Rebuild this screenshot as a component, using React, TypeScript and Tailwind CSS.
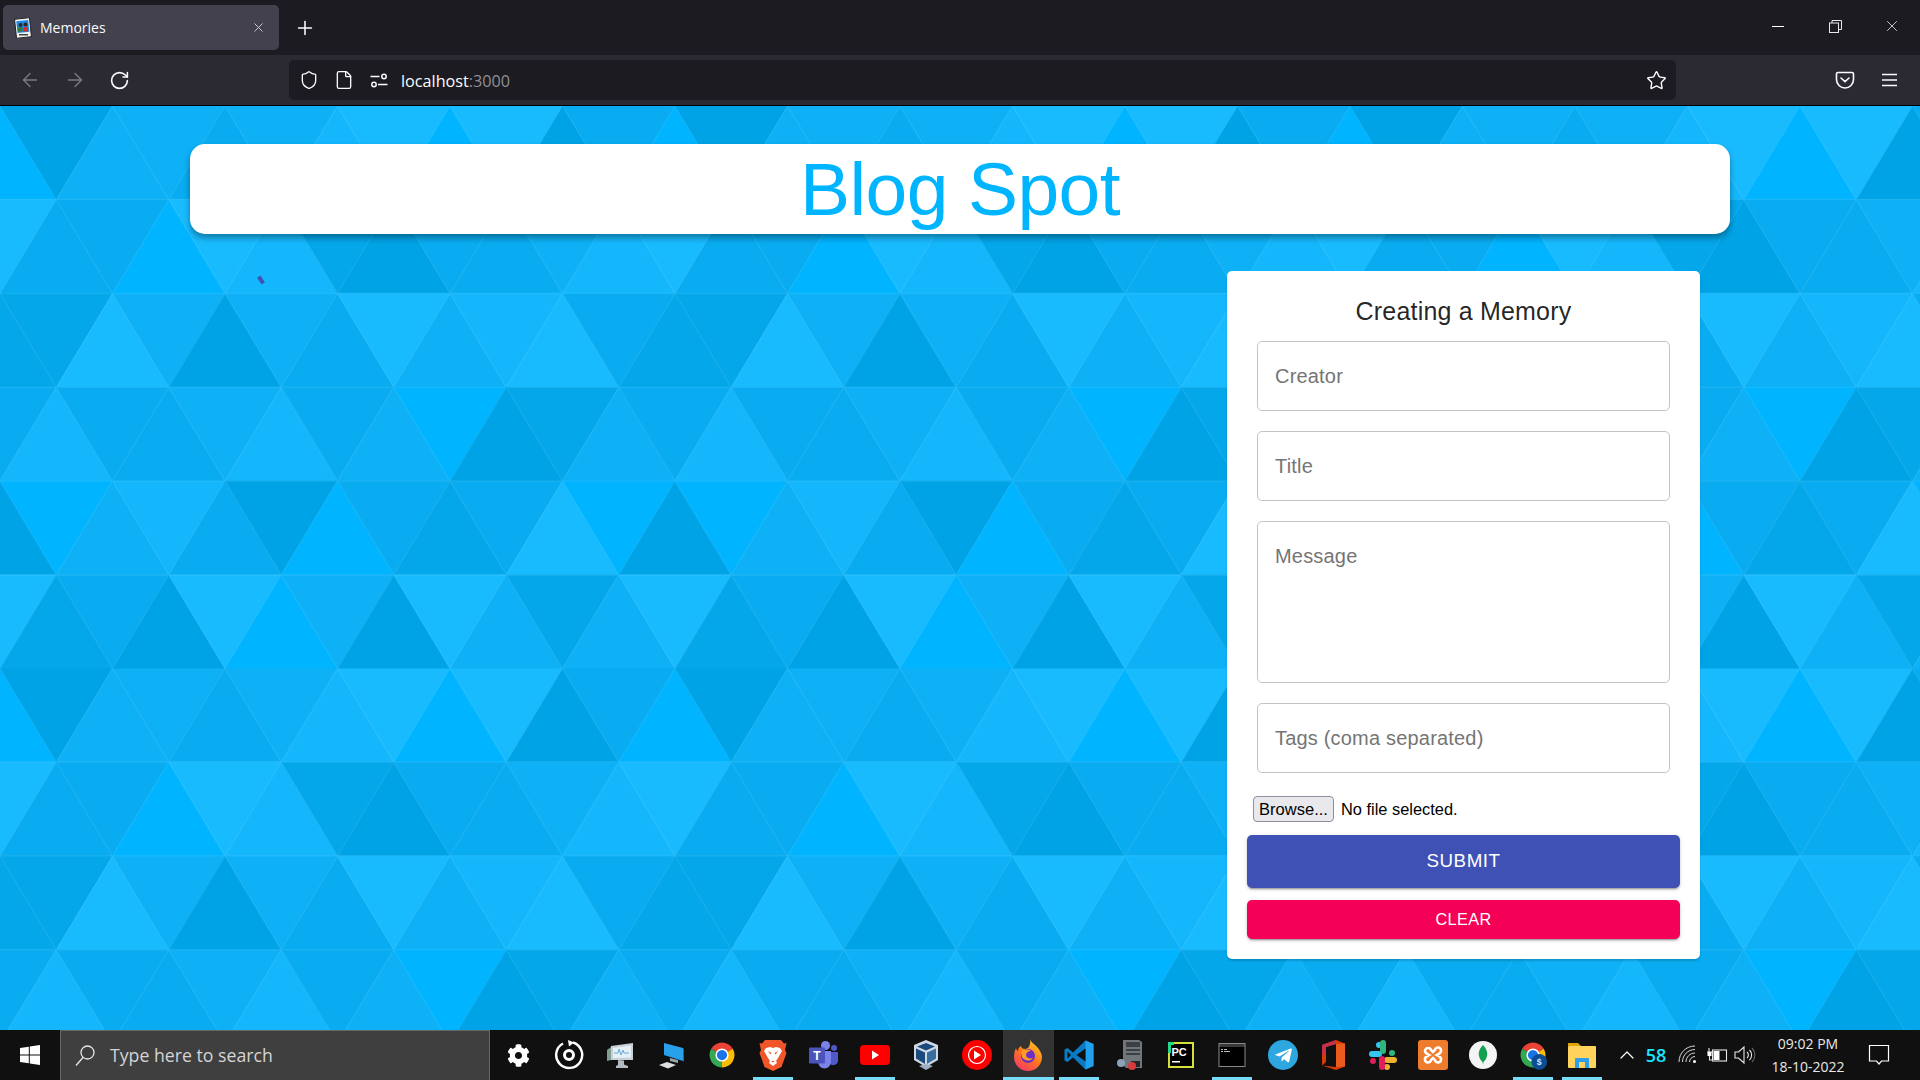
import type { ReactNode } from 'react';
import { ArrowLeft, ArrowRight, RotateCw, Shield, File, Star, X, Plus, ChevronUp } from 'lucide-react';
import { FaCog, FaTelegramPlane } from 'react-icons/fa';

// one tile of the background mesh, 12 triangles per row, 6 rows
const tileRows = ['afddedcbabfe', 'beeabcgfeedc', 'ggbdfdebdcbe', 'eceedcedafgd', 'fadcefaegeba', 'bgefbadfbdgd'];
const shades: Record<string, string> = {
  a: '#00b4ff',
  b: '#19bbff',
  c: '#14b7fc',
  d: '#0eb1f6',
  e: '#09acf0',
  g: '#04a7e9',
  f: '#00a3e5',
};
const triW = 56.25;
const triH = 93.75;

const MeshBackground = () => {
  const tris: ReactNode[] = [];
  tileRows.forEach((row, r) => {
    for (let k = 0; k <= 12; k++) {
      const cx = k * triW;
      const top = r * triH;
      const bot = top + triH;
      const up = k % 2 === r % 2;
      const points = up
        ? `${cx},${top} ${cx - triW},${bot} ${cx + triW},${bot}`
        : `${cx - triW},${top} ${cx + triW},${top} ${cx},${bot}`;
      const fill = shades[row[k % 12]];
      tris.push(<polygon key={`${r}-${k}`} points={points} fill={fill} stroke={fill} strokeWidth={0.4} />);
    }
  });
  return (
    <svg className="absolute inset-0 h-full w-full">
      <defs>
        <pattern id="mesh" patternUnits="userSpaceOnUse" width={675} height={562.5}>
          {tris}
        </pattern>
      </defs>
      <rect width="100%" height="100%" fill="url(#mesh)" />
    </svg>
  );
};

const Favicon = () => (
  <svg width="18" height="20" viewBox="0 0 18 20" className="shrink-0">
    <rect x="1.5" y="0.5" width="15" height="19" fill="#f2f2f2" stroke="#222" transform="rotate(-6 9 10)" />
    <rect x="3" y="2.5" width="12" height="12" fill="#1e88e5" transform="rotate(-6 9 10)" />
    <circle cx="6.5" cy="7" r="2" fill="#2e2a25" />
    <circle cx="11.5" cy="6.5" r="2" fill="#2e2a25" />
    <rect x="4" y="9.5" width="4.5" height="4" fill="#2e7d32" />
    <rect x="9.5" y="9" width="4.5" height="4.5" fill="#d32f2f" />
    <rect x="5" y="16" width="9" height="1.5" fill="#444" />
  </svg>
);

const Perms = () => (
  <svg width="20" height="20" viewBox="0 0 20 20" fill="none" stroke="#fbfbfe" strokeWidth="1.5">
    <path d="M1.5 6.5h9M9 14.5h9.5" />
    <circle cx="15" cy="6.5" r="2.2" />
    <circle cx="5" cy="14.5" r="2.2" />
  </svg>
);

const Pocket = () => (
  <svg width="20" height="20" viewBox="0 0 20 20" fill="none" stroke="#fbfbfe" strokeWidth="1.6">
    <path d="M3 2.5h14a1.5 1.5 0 0 1 1.5 1.5v5.5a8.5 8.5 0 0 1-17 0V4A1.5 1.5 0 0 1 3 2.5z" />
    <path d="M6 8l4 3.6L14 8" strokeLinecap="round" />
  </svg>
);

const Hamburger = () => (
  <svg width="18" height="14" viewBox="0 0 18 14" stroke="#fbfbfe" strokeWidth="1.6">
    <path d="M1 1.5h15M1 7h15M1 12.5h15" />
  </svg>
);

const Restore = () => (
  <svg width="13" height="13" viewBox="0 0 13 13" fill="none" stroke="#e8e8e8" strokeWidth="1">
    <rect x="0.5" y="3" width="9" height="9.5" />
    <path d="M3 3V0.5h9.5v9H9.5" />
  </svg>
);

const WinLogo = () => (
  <svg width="20" height="20" viewBox="0 0 20 20" fill="#fff">
    <polygon points="0,3 8.8,1.7 8.8,9.5 0,9.5" />
    <polygon points="9.8,1.5 20,0 20,9.5 9.8,9.5" />
    <polygon points="0,10.5 8.8,10.5 8.8,18.3 0,17" />
    <polygon points="9.8,10.5 20,10.5 20,20 9.8,18.5" />
  </svg>
);

const SearchGlass = () => (
  <svg width="20" height="22" viewBox="0 0 20 22" fill="none" stroke="#e6e6e6" strokeWidth="1.3">
    <circle cx="12.5" cy="7.5" r="6.5" />
    <path d="M8 12.5L1 20.5" />
  </svg>
);

const Target = () => (
  <svg width="30" height="30" viewBox="0 0 30 30" fill="none" stroke="#fff">
    <path d="M19 2.5A13 13 0 1 1 9 3.5" strokeWidth="2.4" />
    <path d="M14 0l6 2.5-5 4z" fill="#fff" stroke="none" />
    <circle cx="15" cy="15" r="4.5" strokeWidth="3" />
  </svg>
);

const TaskMonitor = () => (
  <svg width="30" height="30" viewBox="0 0 30 30">
    <path d="M6 6l22-3v17L6 20z" fill="#c9d0d4" />
    <path d="M8 8l18-2.500v12L8 18z" fill="#e6f1f7" />
    <path d="M9 13h4l1-4 2 6 2-5 1 3h5" fill="none" stroke="#6aa9d6" strokeWidth="1" />
    <path d="M2 10l4-3v13l-4 1z" fill="#7f9d92" />
    <path d="M13 20l6 .5v4l4 1.500v2H11v-2l2-1z" fill="#b4bbc0" />
  </svg>
);

const MyComputer = () => (
  <svg width="30" height="30" viewBox="0 0 30 30">
    <path d="M8 3l19 5v13L8 15z" fill="#29a0ea" />
    <path d="M8 3l19 5 1 1v13L27 21V8z" fill="#556" />
    <path d="M14 18l8 2v3l-8-2z" fill="#9aa4ab" />
    <path d="M3 25l8-3 9 3-8 3.500z" fill="#dcdfe2" />
  </svg>
);

const Chrome = ({ badge }: { badge?: boolean }) => (
  <svg width="30" height="30" viewBox="0 0 48 48">
    <path d="M24 24L6.7 14A20 20 0 0 1 41.3 14Z" fill="#ea4335" />
    <path d="M24 24L41.3 14A20 20 0 0 1 24 44Z" fill="#fbbc04" />
    <path d="M24 24L24 44A20 20 0 0 1 6.7 14Z" fill="#34a853" />
    <circle cx="24" cy="24" r="10.5" fill="#fff" />
    <circle cx="24" cy="24" r="8.2" fill="#1a73e8" />
    {badge && (
      <>
        <circle cx="34" cy="35" r="12.5" fill="#0d4d91" />
        <text x="34" y="40" textAnchor="middle" fontSize="14" fontWeight="700" fill="#cfe6ff" fontFamily="Liberation Sans">
          $
        </text>
      </>
    )}
  </svg>
);

const Brave = () => (
  <svg width="28" height="32" viewBox="0 0 28 32">
    <path d="M6 1h16l3 3.5 2.5-.5L26 11l1.5 3-5 14L14 32l-8.500-4-5-14L2 11 .5 4 3 4.500z" fill="#f0562a" />
    <path d="M7 9l4-1 3 1 3-1 4 1 2 3-4 7-2 3 1 2-4 3-4-3 1-2-2-3-4-7z" fill="#fff" />
    <path d="M9 12l3.500 2-1 1.500zM19 12l-3.500 2 1 1.500zM12 22h4l-2 1.500z" fill="#f0562a" />
  </svg>
);

const Teams = () => (
  <svg width="30" height="30" viewBox="0 0 30 30">
    <circle cx="16.500" cy="5.500" r="4.500" fill="#7b83eb" />
    <circle cx="25" cy="8" r="3" fill="#5059c9" />
    <path d="M20 12h9v9a5 5 0 0 1-9 2z" fill="#5059c9" />
    <path d="M9 11h13v11a6.500 6.500 0 0 1-13 0z" fill="#7b83eb" />
    <rect x="0" y="7.500" width="16" height="16" rx="1" fill="#4b53bc" />
    <text x="8" y="20" textAnchor="middle" fontSize="12" fontWeight="700" fill="#fff" fontFamily="Liberation Sans">
      T
    </text>
  </svg>
);

const YouTube = () => (
  <svg width="30" height="30" viewBox="0 0 30 30">
    <rect x="0" y="5" width="30" height="20" rx="4" fill="#ff0000" />
    <path d="M12 10.500l7 4.500-7 4.500z" fill="#fff" />
  </svg>
);

const VBox = () => (
  <svg width="28" height="32" viewBox="0 0 28 32">
    <path d="M14 1l12 5v15l-12 7L2 21V6z" fill="#cfd8e3" />
    <path d="M14 4l9 3.500-9 4-9-4z" fill="#1b4a7c" />
    <path d="M4 9.500l9 4V25l-9-5.500z" fill="#1b4a7c" />
    <path d="M24 9.500l-9 4V25l9-5.500z" fill="#3a6d9f" />
    <path d="M7 27l7 4 7-4-7-2z" fill="#9fb0c4" />
  </svg>
);

const YtMusic = () => (
  <svg width="30" height="30" viewBox="0 0 30 30">
    <circle cx="15" cy="15" r="15" fill="#ff0000" />
    <circle cx="15" cy="15" r="8.500" fill="none" stroke="#fff" strokeWidth="1.200" />
    <path d="M12 10.500l7 4.500-7 4.500z" fill="#fff" />
  </svg>
);

const Firefox = () => (
  <svg width="30" height="32" viewBox="0 0 30 32">
    <defs>
      <linearGradient id="ffg" x1="0.8" y1="0" x2="0.2" y2="1">
        <stop offset="0" stopColor="#ffcb2e" />
        <stop offset="0.5" stopColor="#ff7a1a" />
        <stop offset="1" stopColor="#f5356b" />
      </linearGradient>
    </defs>
    <path d="M17 0c1 4 5 5 8 9 3 4 4 7 4 9a14 14 0 0 1-28 0c0-4 1-7 2-9 .5 2 1.500 3 2 3 0-2 1-4 3-5 0 2 2 3 4 3 4 0 6-5 5-10z" fill="url(#ffg)" />
    <circle cx="15" cy="17" r="7" fill="#6a2ec4" />
    <path d="M8 13c3-3 7-3 10-1-3 0-5 2-5 4 0 3 4 4 7 3-3 4-9 3-11-1z" fill="#ff9a24" />
  </svg>
);

const VsCode = () => (
  <svg width="30" height="30" viewBox="0 0 30 30">
    <path d="M21.500 0.500L29.500 4v22l-8 3.500L9 17.500 3.500 22 .5 20.500V9.500L3.500 8 9 12.500z" fill="#0a7ac4" />
    <path d="M21.500 .5L29.500 4v22l-8 3.500z" fill="#21a0ec" />
    <path d="M21.500 8.500v13L12.500 15zM3.500 11.500v7L7 15z" fill="#101010" />
  </svg>
);

const Tower = () => (
  <svg width="28" height="32" viewBox="0 0 28 32">
    <path d="M7 1h16l3 2v26H10l-3-3z" fill="#70767a" />
    <path d="M10 3h14v5H10zM10 10h14v2H10zM10 14h14v2H10z" fill="#3c4044" />
    <path d="M15 22h9v6h-9z" fill="#22262a" />
    <circle cx="5" cy="24" r="4" fill="#8aa3b8" />
    <circle cx="16" cy="27" r="4" fill="#d93a3a" />
  </svg>
);

const PyCharm = () => (
  <svg width="26" height="26" viewBox="0 0 26 26">
    <rect x="1" y="1" width="24" height="24" fill="#000" stroke="#d6e03a" strokeWidth="2" />
    <path d="M0 0h6v3H3v8H0z" fill="#21d789" />
    <text x="3.500" y="14" fontSize="11" fontWeight="700" fill="#fff" fontFamily="Liberation Sans">
      PC
    </text>
    <rect x="4" y="19" width="8" height="1.500" fill="#fff" />
  </svg>
);

const Cmd = () => (
  <svg width="28" height="28" viewBox="0 0 28 28">
    <rect x="0.500" y="2" width="27" height="24" fill="#8a8a8a" />
    <rect x="1.500" y="6" width="25" height="19" fill="#000" />
    <rect x="1.500" y="3" width="25" height="3" fill="#3a3a3a" />
    <path d="M3 8h2v1H3zM6 8h3v1H6zM3 10h2v1H3zM6 10h6v1H6z" fill="#bbb" />
  </svg>
);

const Telegram = () => (
  <div className="flex h-[30px] w-[30px] items-center justify-center rounded-full bg-[#2ea6df]">
    <FaTelegramPlane size={19} color="#fff" />
  </div>
);

const Office = () => (
  <svg width="28" height="32" viewBox="0 0 28 32">
    <path d="M17 1l9 3.500v23L17 31 3 26.500l14 1.500V5L7 8v15l-4 3.500V6z" fill="#d83b01" />
    <path d="M17 1L3 6v10l4-2V8l10-3z" fill="#c4314b" />
    <path d="M17 5v23l9-.5v-23z" fill="#eb5b1f" />
  </svg>
);

const Slack = () => (
  <svg width="30" height="30" viewBox="0 0 30 30">
    <g fill="#36c5f0">
      <rect x="1" y="11" width="13" height="6" rx="3" />
      <rect x="8" y="2" width="6" height="6" rx="3" />
    </g>
    <g fill="#2eb67d">
      <rect x="12" y="0" width="6" height="14" rx="3" />
      <rect x="21" y="10" width="6" height="6" rx="3" />
    </g>
    <g fill="#ecb22e">
      <rect x="16" y="17" width="13" height="6" rx="3" />
      <rect x="16" y="24" width="6" height="6" rx="3" />
    </g>
    <g fill="#e01e5a">
      <rect x="11" y="16" width="6" height="14" rx="3" />
      <rect x="2" y="18" width="6" height="6" rx="3" />
    </g>
  </svg>
);

const Xampp = () => (
  <svg width="30" height="30" viewBox="0 0 30 30">
    <rect width="30" height="30" rx="3" fill="#ef7b2c" />
    <path
      d="M10 8a3 3 0 0 0-3 3c0 2 2 3 4 4-2 1-4 2-4 4a3 3 0 0 0 6 1l2-2 2 2a3 3 0 0 0 6-1c0-2-2-3-4-4 2-1 4-2 4-4a3 3 0 0 0-6-1l-2 2-2-2a3 3 0 0 0-3-2z"
      fill="none"
      stroke="#fff"
      strokeWidth="2.600"
    />
  </svg>
);

const Mongo = () => (
  <svg width="30" height="30" viewBox="0 0 30 30">
    <circle cx="15" cy="15" r="14" fill="#f4f4f4" />
    <path d="M15 5c3 3 5 7 4 11-.5 3-2.500 5-3.500 6l-.5 3-.5-3c-1-1-3-3-3.500-6-1-4 1-8 4-11z" fill="#13a050" />
  </svg>
);

const Explorer = () => (
  <svg width="30" height="30" viewBox="0 0 30 30">
    <path d="M1 3h10l3 3H1z" fill="#e2a400" />
    <rect x="1" y="6" width="28" height="22" rx="1" fill="#ffd35c" />
    <path d="M8 28v-9a1 1 0 0 1 1-1h12a1 1 0 0 1 1 1v9h-4v-6h-6v6z" fill="#2f9ee8" />
  </svg>
);

const Wifi = () => (
  <svg width="22" height="22" viewBox="0 0 22 22" fill="none" stroke="#d8d8d8" strokeWidth="1">
    <path d="M2 18C2 9 9 2 18 2M5.500 18C5.500 11 11 5.500 18 5.500M9 18c0-5 4-9 9-9M12.500 18c0-3 2.500-5.500 5.500-5.500" />
    <circle cx="17.500" cy="17.500" r="1.500" fill="#fff" stroke="none" />
  </svg>
);

const Battery = () => (
  <svg width="22" height="16" viewBox="0 0 22 16" fill="none" stroke="#e8e8e8" strokeWidth="1.100">
    <rect x="6.500" y="3" width="14" height="11" />
    <rect x="7.500" y="4" width="6" height="9" fill="#fff" stroke="none" />
    <path d="M3 5V1M1 5h5M3.500 9v4h3" />
    <rect x="1.500" y="5" width="4" height="4" fill="#fff" stroke="none" />
  </svg>
);

const Speaker = () => (
  <svg width="22" height="20" viewBox="0 0 22 20" fill="none" stroke="#e8e8e8" strokeWidth="1.100">
    <path d="M1 7h3.500L10 2v16l-5.500-5H1z" />
    <path d="M13 7a4 4 0 0 1 0 6M15.500 5a7 7 0 0 1 0 10" />
    <path d="M18 3a10 10 0 0 1 0 14" stroke="#666" />
  </svg>
);

const Notification = () => (
  <svg width="22" height="22" viewBox="0 0 22 22" fill="none" stroke="#fff" strokeWidth="1.200">
    <path d="M1.500 1.500h19v15.500h-7l-2.500 3-2.500-3h-7z" />
  </svg>
);

// the pinned icons are not evenly spaced in the shot: the last six sit closer together
const taskIcons: { id: string; icon: ReactNode; running?: boolean; active?: boolean; narrow?: boolean }[] = [
  { id: 'settings', icon: <FaCog size={23} color="#fff" /> },
  { id: 'target', icon: <Target /> },
  { id: 'monitor', icon: <TaskMonitor /> },
  { id: 'computer', icon: <MyComputer /> },
  { id: 'chrome', icon: <Chrome /> },
  { id: 'brave', icon: <Brave />, running: true },
  { id: 'teams', icon: <Teams /> },
  { id: 'youtube', icon: <YouTube />, running: true },
  { id: 'vbox', icon: <VBox /> },
  { id: 'ytmusic', icon: <YtMusic /> },
  { id: 'firefox', icon: <Firefox />, active: true },
  { id: 'vscode', icon: <VsCode />, running: true },
  { id: 'tower', icon: <Tower /> },
  { id: 'pycharm', icon: <PyCharm /> },
  { id: 'cmd', icon: <Cmd />, running: true },
  { id: 'telegram', icon: <Telegram /> },
  { id: 'office', icon: <Office />, narrow: true },
  { id: 'slack', icon: <Slack />, narrow: true },
  { id: 'xampp', icon: <Xampp />, narrow: true },
  { id: 'mongo', icon: <Mongo />, narrow: true },
  { id: 'chrome2', icon: <Chrome badge />, running: true, narrow: true },
  { id: 'explorer', icon: <Explorer />, running: true, narrow: true },
];

const TaskItem = ({ icon, running, active, narrow }: { icon: ReactNode; running?: boolean; active?: boolean; narrow?: boolean }) => (
  <div
    className={`relative flex h-full shrink-0 items-center justify-center ${narrow ? 'w-[49.8px]' : 'w-[51px]'} ${active ? 'bg-[#333333]' : ''}`}
  >
    {icon}
    {running && <div className="absolute bottom-0 left-1/2 h-[3px] w-10 -translate-x-1/2 bg-[#76dcf8]" />}
    {active && <div className="absolute bottom-0 left-0 h-[3px] w-full bg-[#76dcf8]" />}
  </div>
);

const fieldClass =
  'mx-[10px] block w-[413px] rounded-[5px] border border-[#c4c4c4] bg-white px-[17px] text-[20px] tracking-[0.19px] text-black outline-none placeholder:text-[#757575]';

const buttonShadow = 'shadow-[0_3px_1px_-2px_rgba(0,0,0,0.2),0_2px_2px_0_rgba(0,0,0,0.14),0_1px_5px_0_rgba(0,0,0,0.12)]';

export default function App() {
  return (
    <div className="flex h-screen w-full flex-col overflow-hidden font-['Liberation_Sans',Arial,sans-serif]">
      {/* browser tabs */}
      <div className="flex h-[55px] shrink-0 items-start bg-[#1c1b22] text-[#fbfbfe]">
        <div className="ml-[3px] mt-[5px] flex h-[45px] w-[276px] items-center rounded-[5px] bg-[#42414d] pl-[11px] pr-[13px]">
          <Favicon />
          <span className="ml-[8px] flex-1 font-['Open_Sans',sans-serif] text-[14px]">Memories</span>
          <X size={15} strokeWidth={1.5} color="#d0d0d4" />
        </div>
        <div className="ml-[15px] mt-[17px]">
          <Plus size={22} strokeWidth={1.7} />
        </div>
        <div className="ml-auto mr-[19px] mt-[17px] flex items-center">
          <div className="h-px w-3 bg-white" />
          <div className="ml-[45px]">
            <Restore />
          </div>
          <div className="ml-[41px]">
            <X size={18} strokeWidth={1.1} color="#e8e8e8" />
          </div>
        </div>
      </div>

      {/* toolbar */}
      <div className="flex h-[51px] shrink-0 items-start border-b border-black bg-[#2b2a33]">
        <div className="ml-[19px] mt-[14px] flex items-center gap-[23px]">
          <ArrowLeft size={22} strokeWidth={1.5} color="#7d7c84" />
          <ArrowRight size={22} strokeWidth={1.5} color="#7d7c84" />
          <RotateCw size={21} strokeWidth={1.8} color="#fbfbfe" />
        </div>
        <div className="ml-[159px] mt-[5px] flex h-10 w-[1387px] items-center rounded-[5px] bg-[#1c1b22] pl-[10px] pr-[9px]">
          <Shield size={20} strokeWidth={1.6} color="#fbfbfe" />
          <File size={20} strokeWidth={1.6} color="#fbfbfe" className="ml-[15px]" />
          <div className="ml-[15px]">
            <Perms />
          </div>
          <span className="ml-[12px] mt-[2px] font-['Open_Sans',sans-serif] text-[16.2px] text-[#fbfbfe]">
            localhost<span className="text-[#8f8f95]">:3000</span>
          </span>
          <Star size={21} strokeWidth={1.6} color="#fbfbfe" className="ml-auto" />
        </div>
        <div className="ml-[159px] mt-[15px]">
          <Pocket />
        </div>
        <div className="ml-[26px] mt-[18px]">
          <Hamburger />
        </div>
      </div>

      {/* page */}
      <main className="relative min-h-0 flex-1">
        <MeshBackground />
        <div className="relative">
          <div className="ml-[190px] mt-[38px] flex h-[90px] w-[1540px] items-center justify-center rounded-[15px] bg-white shadow-[0_4px_6px_rgba(0,0,0,0.35)]">
            <h1 className="text-[75px] leading-none tracking-[-0.6px] text-[#00b5ff]">Blog Spot</h1>
          </div>
          {/* spinner stuck at its first frame */}
          <div className="absolute left-[259px] top-[132px] h-[8px] w-[4px] -rotate-[35deg] bg-[#3f51b5]" />
          <div className="ml-[1227px] mt-[37px] w-[473px] rounded-[5px] bg-white px-[20px] pb-[20px] pt-[25px] shadow-[0_2px_2px_rgba(0,0,0,0.15)]">
            <h2 className="text-center text-[25px] leading-[30px] tracking-[0.19px] text-[rgba(0,0,0,0.87)]">Creating a Memory</h2>
            <input placeholder="Creator" className={`mt-[15px] h-[70px] ${fieldClass}`} />
            <input placeholder="Title" className={`mt-[20px] h-[70px] ${fieldClass}`} />
            <textarea placeholder="Message" className={`mt-[20px] h-[162px] resize-none py-[22px] leading-[24px] ${fieldClass}`} />
            <input placeholder="Tags (coma separated)" className={`mt-[20px] h-[70px] ${fieldClass}`} />
            <div className="mt-[23px] flex items-center pl-[6px] text-black">
              <button className="h-[26px] w-[81px] rounded-[4px] border border-[#8f8f9d] bg-[#e9e9ed] text-[16.5px] leading-none">
                Browse...
              </button>
              <span className="ml-[7px] text-[16.4px]">No file selected.</span>
            </div>
            <button className={`mt-[13px] block h-[53px] w-[433px] rounded-[5px] bg-[#3f51b5] text-[18.75px] tracking-[0.5px] text-white ${buttonShadow}`}>
              SUBMIT
            </button>
            <button className={`mt-[12px] block h-[39px] w-[433px] rounded-[5px] bg-[#f50057] text-[16.25px] tracking-[0.4px] text-white ${buttonShadow}`}>
              CLEAR
            </button>
          </div>
        </div>
      </main>

      {/* windows taskbar */}
      <div className="flex h-[50px] shrink-0 items-stretch bg-[#101010] font-['Open_Sans',sans-serif] text-white">
        <div className="flex w-[60px] shrink-0 items-center justify-center">
          <WinLogo />
        </div>
        <div className="flex w-[430px] shrink-0 items-center border border-b-0 border-[#666666] bg-[#3f3f3f] pl-[14px]">
          <SearchGlass />
          <span className="ml-[15px] text-[17.7px] text-[#d4d4d4]">Type here to search</span>
        </div>
        <div className="ml-[2.5px] flex h-full">
          {taskIcons.map(({ id, icon, running, active, narrow }) => (
            <TaskItem key={id} icon={icon} running={running} active={active} narrow={narrow} />
          ))}
        </div>
        <div className="ml-auto flex pr-[14px]">
          <div className="flex w-[34px] items-center justify-center">
            <ChevronUp size={24} strokeWidth={1.2} />
          </div>
          <div className="flex w-[24px] items-center justify-center text-[18px] font-semibold text-[#19e5ff]">58</div>
          <div className="flex w-[40px] items-center justify-center">
            <Wifi />
          </div>
          <div className="flex w-[18px] items-center justify-center">
            <div className="shrink-0">
              <Battery />
            </div>
          </div>
          <div className="flex w-[38px] items-center justify-center">
            <Speaker />
          </div>
          <div className="flex w-[88px] flex-col items-center justify-center text-[14px] leading-[23px] text-[#e8e8e8]">
            <span>09:02 PM</span>
            <span>18-10-2022</span>
          </div>
          <div className="flex w-[54px] items-center justify-center">
            <Notification />
          </div>
        </div>
      </div>
    </div>
  );
}
